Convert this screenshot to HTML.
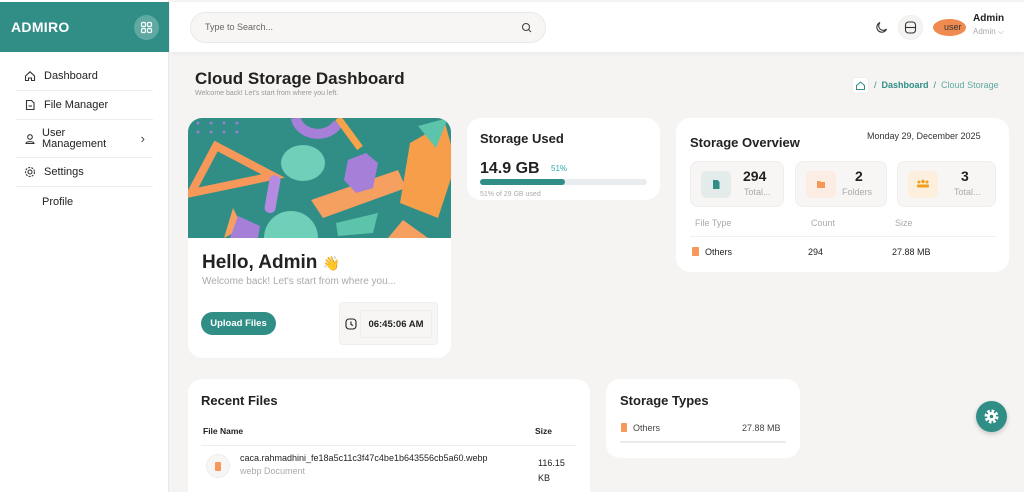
<!DOCTYPE html>
<html style="width:1024px;height:492px;overflow:hidden"><head><meta charset="utf-8"><style>
*{box-sizing:border-box;margin:0;padding:0}
body{width:1024px;height:492px;overflow:hidden;background:#f5f4f2;font-family:"Liberation Sans",sans-serif;color:#222;position:relative}
.abs{position:absolute}
.card{position:absolute;background:#fff;border-radius:14px}
.side{left:0;top:0;width:169px;height:492px;background:#fff;border-right:1px solid #e8e8e8}
.logo{left:0;top:2px;width:169px;height:50px;background:#308e87}
.nav{position:absolute;left:16px;width:137px;font-size:11px;color:#222;display:flex;align-items:center;border-bottom:1px solid #eee}
.nav svg{margin:0 8px 0 8px}
.stat{position:absolute;top:43px;height:46px;background:#f7f6f4;border:1px solid #eee;border-radius:8px}
.ic{position:absolute;left:10px;top:9px;width:30px;height:27px;border-radius:5px}
</style></head><body>
<div class="abs side"></div>
<div class="abs logo">
 <div class="abs" style="left:11px;top:17px;color:#fff;font-weight:bold;font-size:14px;letter-spacing:.3px">ADMIRO</div>
 <div class="abs" style="left:134px;top:13px;width:25px;height:25px;border-radius:50%;background:#5fa9a3">
  <svg width="25" height="25" viewBox="0 0 25 25" fill="none" stroke="#fff" stroke-width="1.2"><rect x="7.5" y="7.5" width="4" height="4" rx="1.3"/><rect x="13.5" y="7.5" width="4" height="4" rx="1.3"/><rect x="7.5" y="13.5" width="4" height="4" rx="1.3"/><rect x="13.5" y="13.5" width="4" height="4" rx="1.3"/></svg>
 </div>
</div>
<div class="nav" style="top:62px;height:29px"><svg width="12" height="12" viewBox="0 0 12 12" fill="none" stroke="#333" stroke-width="1.1"><path d="M1.5 6 6 1.8 10.5 6V10.5H7.5V8H4.5V10.5H1.5Z"/></svg>Dashboard</div>
<div class="nav" style="top:91px;height:29px"><svg width="12" height="12" viewBox="0 0 12 12" fill="none" stroke="#333" stroke-width="1.1"><path d="M2.5 1.5H7.5L10 4V10.5H2.5Z"/><path d="M4.5 7H8"/></svg>File Manager</div>
<div class="nav" style="top:120px;height:38px;line-height:11px"><svg width="12" height="12" viewBox="0 0 12 12" fill="none" stroke="#333" stroke-width="1.1"><circle cx="6" cy="4" r="2.3"/><path d="M2 10.5C2 8 10 8 10 10.5Z"/></svg><span style="margin-left:-2px">User<br>Management</span><span style="position:absolute;right:8px;font-size:13px;color:#444">›</span></div>
<div class="nav" style="top:158px;height:29px"><svg width="12" height="12" viewBox="0 0 12 12" fill="none" stroke="#333" stroke-width="1.1"><circle cx="6" cy="6" r="2"/><circle cx="6" cy="6" r="4.5" stroke-dasharray="2 1.2"/></svg>Settings</div>
<div class="nav" style="top:187px;height:29px;border:none;padding-left:26px">Profile</div>

<div class="abs" style="left:170px;top:2px;width:854px;height:50px;background:#fff;box-shadow:0 2px 4px rgba(0,0,0,.04)"></div>
<div class="abs" style="left:190px;top:12px;width:356px;height:31px;border-radius:16px;background:#f7f6f4;border:1px solid #e8e8e8;font-size:9px;color:#666;padding:9px 0 0 14px">Type to Search...
 <svg class="abs" style="left:330px;top:9px" width="11" height="11" viewBox="0 0 11 11" fill="none" stroke="#444" stroke-width="1.1"><circle cx="5" cy="5" r="3.5"/><path d="M7.6 7.6 10 10"/></svg></div>
<svg class="abs" style="left:875px;top:21px" width="13" height="13" viewBox="0 0 13 13" fill="none" stroke="#333" stroke-width="1.1"><path d="M5 1.5A5 5 0 1 0 11.5 8 4 4 0 0 1 5 1.5Z"/></svg>
<div class="abs" style="left:898px;top:15px;width:25px;height:25px;border-radius:50%;background:#f5f4f2;border:1px solid #eee"><svg width="23" height="23" viewBox="0 0 23 23" fill="none" stroke="#333" stroke-width="1.1"><rect x="6.5" y="6" width="10" height="11" rx="3"/><path d="M6.5 11.5H16.5"/></svg></div>
<div class="abs" style="left:933px;top:19px;width:33px;height:17px;border-radius:50%;background:#ef8a50;font-size:9px;color:#333;padding:3px 0 0 11px">user</div>
<div class="abs" style="left:973px;top:13px;font-size:10px;font-weight:bold">Admin</div>
<div class="abs" style="left:973px;top:27px;font-size:8px;color:#aaa">Admin ⌵</div>

<div class="abs" style="left:195px;top:69px;font-size:17px;font-weight:bold;color:#222">Cloud Storage Dashboard</div>
<div class="abs" style="left:195px;top:90px;font-size:7px;color:#999">Welcome back! Let's start from where you left.</div>
<div class="abs" style="left:852px;top:77px;width:17px;height:17px;border-radius:4px;background:#fff;border:1px solid #eee"><svg width="15" height="15" viewBox="0 0 15 15" fill="none" stroke="#308e87" stroke-width="1"><path d="M3.5 7.5 7.5 4 11.5 7.5V11.5H3.5Z"/></svg></div>
<div class="abs" style="left:874px;top:80px;font-size:9px;color:#308e87">/ &nbsp;<span style="font-weight:bold">Dashboard</span> &nbsp;/ &nbsp;<span style="color:#5fa9a3">Cloud Storage</span></div>

<div class="card" style="left:188px;top:118px;width:263px;height:240px;overflow:hidden">
 <svg width="263" height="120" viewBox="0 0 263 120">
  <rect width="263" height="120" fill="#308e87"/>
  <g fill="#9b7fd1"><circle cx="10" cy="5" r="1.5"/><circle cx="23" cy="5" r="1.5"/><circle cx="36" cy="5" r="1.5"/><circle cx="49" cy="5" r="1.5"/><circle cx="10" cy="14" r="1.5"/><circle cx="23" cy="14" r="1.5"/><circle cx="36" cy="14" r="1.5"/><circle cx="49" cy="14" r="1.5"/></g>
  <path d="M3 75 28 28 85 58Z" fill="none" stroke="#f5985a" stroke-width="8"/>
  <ellipse cx="115" cy="45" rx="22" ry="18" fill="#6fcfb8"/>
  <path d="M108 0A22 18 0 0 0 150 5" fill="none" stroke="#a67fd8" stroke-width="10"/>
  <path d="M150 0 172 30" stroke="#f6a34a" stroke-width="7"/>
  <path d="M123 82 210 52 218 70 135 100Z" fill="#f5a060"/>
  <path d="M160 42 178 35 190 45 185 70 168 75 156 62Z" fill="#a67fd8"/>
  <path d="M222 25 257 5 268 45 250 100 212 85Z" fill="#f79e4b"/>
  <path d="M230 8 260 0 248 30Z" fill="#5cc4aa"/>
  <rect x="79" y="57" width="11" height="38" rx="5" fill="#b48be0" transform="rotate(10 84 76)"/>
  <circle cx="103" cy="120" r="27" fill="#6fcfb8"/>
  <path d="M36 120 45 90 55 110Z" fill="#f5a060"/>
  <path d="M42 120 50 98 72 108 70 120Z" fill="#a67fd8"/>
  <path d="M148 105 190 95 185 115 150 118Z" fill="#5cc4aa"/>
  <path d="M200 120 215 102 240 120Z" fill="#f5a060"/>
 </svg>
 <div class="abs" style="left:14px;top:134px;font-size:19px;font-weight:bold">Hello, Admin <span style="font-size:14px">👋</span></div>
 <div class="abs" style="left:14px;top:158px;font-size:10px;color:#aaa">Welcome back! Let's start from where you...</div>
 <div class="abs" style="left:13px;top:194px;width:75px;height:23px;border-radius:12px;background:#308e87;color:#fff;font-size:9.5px;font-weight:bold;text-align:center;line-height:23px">Upload Files</div>
 <div class="abs" style="left:151px;top:184px;width:99px;height:43px;border-radius:4px;background:#f7f6f4;border:1px solid #eee">
  <svg class="abs" style="left:5px;top:15px" width="12" height="12" viewBox="0 0 12 12" fill="none" stroke="#222" stroke-width="1.1"><rect x="1" y="1" width="10" height="10" rx="3"/><path d="M6 3.5V6.5L8 7.5"/></svg>
  <div class="abs" style="left:20px;top:7px;width:72px;height:28px;background:#f7f6f4;border:1px solid #eee;border-radius:3px;font-size:9.5px;font-weight:bold;text-align:center;line-height:27px">06:45:06 AM</div>
 </div>
</div>

<div class="card" style="left:467px;top:118px;width:193px;height:82px">
 <div class="abs" style="left:13px;top:13px;font-size:13px;font-weight:bold">Storage Used</div>
 <div class="abs" style="left:13px;top:42px;font-size:16px;font-weight:bold">14.9 GB</div>
 <div class="abs" style="left:84px;top:46px;font-size:8px;color:#3aa;">51%</div>
 <div class="abs" style="left:13px;top:61px;width:167px;height:6px;border-radius:3px;background:#e9ecef"><div style="width:85px;height:6px;border-radius:3px;background:#308e87"></div></div>
 <div class="abs" style="left:13px;top:73px;font-size:7px;color:#aaa">51% of 29 GB used</div>
</div>

<div class="card" style="left:676px;top:118px;width:333px;height:154px">
 <div class="abs" style="left:14px;top:17px;font-size:13px;font-weight:bold">Storage Overview</div>
 <div class="abs" style="left:191px;top:13px;font-size:9px;color:#333">Monday 29, December 2025</div>
 <div class="stat" style="left:14px;width:94px"><div class="ic" style="background:#e4eceb"><svg width="30" height="27"><path d="M12 9H16.5L18.5 11V18H12Z" fill="#308e87"/></svg></div><div class="abs" style="left:52px;top:6px;font-size:14px;font-weight:bold">294</div><div class="abs" style="left:53px;top:25px;font-size:9px;color:#aaa">Total...</div></div>
 <div class="stat" style="left:119px;width:92px"><div class="ic" style="background:#fbece4"><svg width="30" height="27"><path d="M11 10H14L15 11H19V17H11Z" fill="#f5985a"/></svg></div><div class="abs" style="left:59px;top:6px;font-size:14px;font-weight:bold">2</div><div class="abs" style="left:46px;top:25px;font-size:9px;color:#aaa">Folders</div></div>
 <div class="stat" style="left:221px;width:99px"><div class="ic" style="background:#fcefdd"><svg width="30" height="27" fill="#f0a020"><circle cx="11" cy="11" r="1.5"/><circle cx="15" cy="10.5" r="1.8"/><circle cx="19" cy="11" r="1.5"/><rect x="9" y="13.5" width="12" height="3" rx="1"/></svg></div><div class="abs" style="left:63px;top:6px;font-size:14px;font-weight:bold">3</div><div class="abs" style="left:56px;top:25px;font-size:9px;color:#aaa">Total...</div></div>
 <div class="abs" style="left:19px;top:100px;font-size:9px;color:#aaa">File Type</div>
 <div class="abs" style="left:135px;top:100px;font-size:9px;color:#aaa">Count</div>
 <div class="abs" style="left:219px;top:100px;font-size:9px;color:#aaa">Size</div>
 <div class="abs" style="left:14px;top:118px;width:306px;border-top:1px solid #f0f0f0"></div>
 <div class="abs" style="left:16px;top:129px;width:7px;height:9px;border-radius:1px;background:#f5985a"></div>
 <div class="abs" style="left:29px;top:129px;font-size:9px">Others</div>
 <div class="abs" style="left:132px;top:129px;font-size:9px">294</div>
 <div class="abs" style="left:216px;top:129px;font-size:9px">27.88 MB</div>
</div>

<div class="card" style="left:188px;top:379px;width:402px;height:130px">
 <div class="abs" style="left:13px;top:14px;font-size:13px;font-weight:bold">Recent Files</div>
 <div class="abs" style="left:15px;top:47px;font-size:8.5px;font-weight:bold">File Name</div>
 <div class="abs" style="left:347px;top:47px;font-size:8.5px;font-weight:bold">Size</div>
 <div class="abs" style="left:13px;top:66px;width:375px;border-top:1px solid #eee"></div>
 <div class="abs" style="left:18px;top:75px;width:24px;height:24px;border-radius:50%;background:#f7f6f4;border:1px solid #eee"><div style="margin:7px 0 0 8px;width:6px;height:9px;background:#f5985a;border-radius:1px"></div></div>
 <div class="abs" style="left:52px;top:74px;font-size:9px">caca.rahmadhini_fe18a5c11c3f47c4be1b643556cb5a60.webp</div>
 <div class="abs" style="left:52px;top:87px;font-size:9px;color:#aaa">webp Document</div>
 <div class="abs" style="left:350px;top:77px;font-size:9px;line-height:15px">116.15<br>KB</div>
</div>

<div class="card" style="left:606px;top:379px;width:194px;height:79px">
 <div class="abs" style="left:14px;top:14px;font-size:13px;font-weight:bold">Storage Types</div>
 <div class="abs" style="left:15px;top:44px;width:6px;height:9px;border-radius:1px;background:#f5985a"></div>
 <div class="abs" style="left:27px;top:44px;font-size:9px;color:#444">Others</div>
 <div class="abs" style="left:136px;top:44px;font-size:9px;color:#444">27.88 MB</div>
 <div class="abs" style="left:14px;top:62px;width:166px;height:2px;background:#e9ecef"></div>
</div>

<div class="abs" style="left:976px;top:401px;width:31px;height:31px;border-radius:50%;background:#308e87;box-shadow:0 2px 5px rgba(0,0,0,.2)">
 <svg width="31" height="31" viewBox="0 0 31 31"><circle cx="15.5" cy="15.5" r="5.5" fill="none" stroke="#fff" stroke-width="3" stroke-dasharray="2.6 1.7"/><circle cx="15.5" cy="15.5" r="4.5" fill="#fff"/><circle cx="15.5" cy="15.5" r="1.8" fill="#308e87"/></svg>
</div>
</body></html>
